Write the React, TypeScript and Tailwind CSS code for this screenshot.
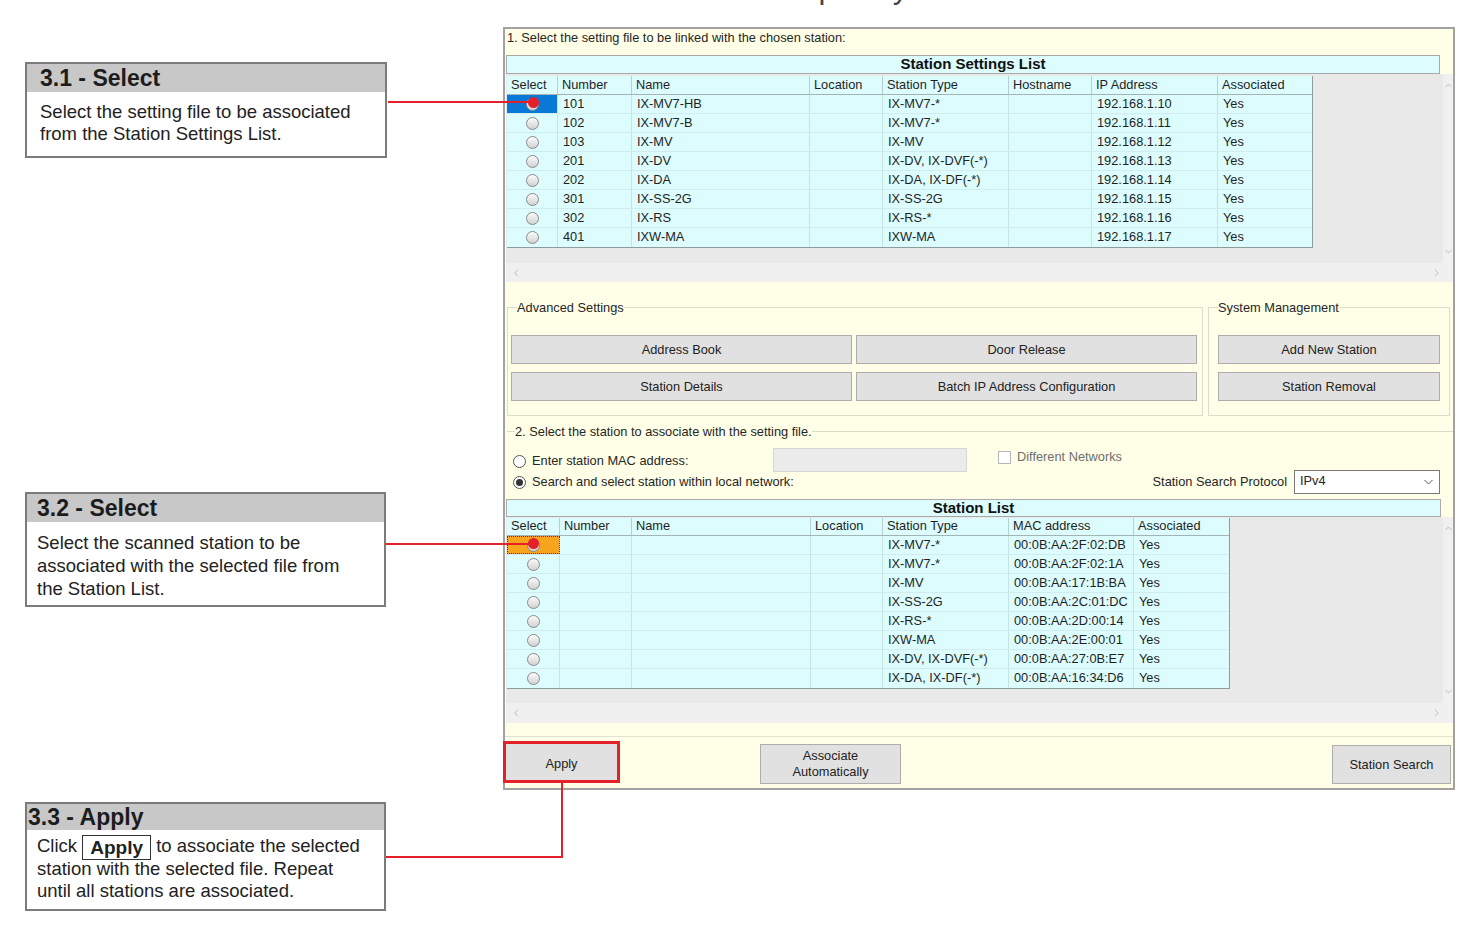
import React from "react";

const SET_COLS = ["w-[51px]", "w-[74px]", "w-[178px]", "w-[73px]", "w-[126px]", "w-[83px]", "w-[126px]", "w-[94px]"];
const SET_HEAD = ["Select", "Number", "Name", "Location", "Station Type", "Hostname", "IP Address", "Associated"];
const SET_ROWS = [
  ["101", "IX-MV7-HB", "", "IX-MV7-*", "", "192.168.1.10", "Yes"],
  ["102", "IX-MV7-B", "", "IX-MV7-*", "", "192.168.1.11", "Yes"],
  ["103", "IX-MV", "", "IX-MV", "", "192.168.1.12", "Yes"],
  ["201", "IX-DV", "", "IX-DV, IX-DVF(-*)", "", "192.168.1.13", "Yes"],
  ["202", "IX-DA", "", "IX-DA, IX-DF(-*)", "", "192.168.1.14", "Yes"],
  ["301", "IX-SS-2G", "", "IX-SS-2G", "", "192.168.1.15", "Yes"],
  ["302", "IX-RS", "", "IX-RS-*", "", "192.168.1.16", "Yes"],
  ["401", "IXW-MA", "", "IXW-MA", "", "192.168.1.17", "Yes"],
];

const STA_COLS = ["w-[53px]", "w-[72px]", "w-[179px]", "w-[72px]", "w-[126px]", "w-[125px]", "w-[95px]"];
const STA_HEAD = ["Select", "Number", "Name", "Location", "Station Type", "MAC address", "Associated"];
const STA_ROWS = [
  ["", "", "", "IX-MV7-*", "00:0B:AA:2F:02:DB", "Yes"],
  ["", "", "", "IX-MV7-*", "00:0B:AA:2F:02:1A", "Yes"],
  ["", "", "", "IX-MV", "00:0B:AA:17:1B:BA", "Yes"],
  ["", "", "", "IX-SS-2G", "00:0B:AA:2C:01:DC", "Yes"],
  ["", "", "", "IX-RS-*", "00:0B:AA:2D:00:14", "Yes"],
  ["", "", "", "IXW-MA", "00:0B:AA:2E:00:01", "Yes"],
  ["", "", "", "IX-DV, IX-DVF(-*)", "00:0B:AA:27:0B:E7", "Yes"],
  ["", "", "", "IX-DA, IX-DF(-*)", "00:0B:AA:16:34:D6", "Yes"],
];

function Chev({ dir }: { dir: "left" | "right" | "up" | "down" }) {
  const flat = dir === "up" || dir === "down";
  const d = {
    left: "M4 0.5L0.8 4L4 7.5",
    right: "M1 0.5L4.2 4L1 7.5",
    up: "M0.5 4L3.5 1L6.5 4",
    down: "M0.5 1L3.5 4L6.5 1",
  }[dir];
  return (
    <svg width={flat ? 7 : 5} height={flat ? 5 : 8} viewBox={flat ? "0 0 7 5" : "0 0 5 8"}>
      <path d={d} fill="none" stroke="#bdbdbd" strokeWidth="1" />
    </svg>
  );
}

function TableRadio() {
  return <span className="block w-[13px] h-[13px] rounded-full border border-[#8a8a8a] bg-linear-to-b from-[#fbfbfb] to-[#d2d2d2]" />;
}

function FormRadio({ checked }: { checked?: boolean }) {
  return (
    <span className="w-[13px] h-[13px] shrink-0 rounded-full border border-[#555] bg-white flex items-center justify-center">
      {checked && <span className="w-[7px] h-[7px] rounded-full bg-[#333]" />}
    </span>
  );
}

interface TableProps {
  cols: string[];
  head: string[];
  rows: string[][];
  headH: string;
  selClass: string;
}

function DataTable({ cols, head, rows, headH, selClass }: TableProps) {
  return (
    <div className="w-fit border-r border-b border-[#8f9c9e] bg-[#dcfcfe] text-[12.8px] text-[#1f1f1f] leading-none">
      <div className={`flex ${headH} border-b border-[#a3b4b6]`}>
        {head.map((h, i) => (
          <div
            key={h}
            className={`${cols[i]} shrink-0 flex items-center pl-[4px] whitespace-nowrap ${i < head.length - 1 ? "border-r border-[#b7cfd2]" : ""}`}
          >
            {h}
          </div>
        ))}
      </div>
      {rows.map((r, ri) => (
        <div key={ri} className={`flex h-[19px] ${ri < rows.length - 1 ? "border-b border-[#d0ecee]" : ""}`}>
          <div className={`${cols[0]} shrink-0 flex items-center justify-center border-r border-[#c6e3e6] ${ri === 0 ? selClass : ""}`}>
            <TableRadio />
          </div>
          {r.map((c, ci) => (
            <div
              key={ci}
              className={`${cols[ci + 1]} shrink-0 flex items-center pl-[5px] whitespace-nowrap ${ci < r.length - 1 ? "border-r border-[#c6e3e6]" : ""}`}
            >
              {c}
            </div>
          ))}
        </div>
      ))}
    </div>
  );
}

function VScroll({ py }: { py: string }) {
  return (
    <div className={`w-[10px] shrink-0 bg-[#f0f0f0] flex flex-col items-center justify-between ${py}`}>
      <Chev dir="up" />
      <Chev dir="down" />
    </div>
  );
}

function HScroll({ h }: { h: string }) {
  return (
    <div className={`${h} shrink-0 ml-[1px] bg-[#f0f0f0] flex items-center justify-between pl-[8px] pr-[14px]`}>
      <Chev dir="left" />
      <Chev dir="right" />
    </div>
  );
}

function Btn({ children, className }: { children: React.ReactNode; className: string }) {
  return (
    <div className={`bg-[#e1e1e1] border border-[#adadad] flex items-center justify-center text-center text-[12.8px] text-[#222] ${className}`}>
      {children}
    </div>
  );
}

function Callout({ title, titleClass, headH, className, bodyClass, children }: {
  title: string;
  titleClass: string;
  headH: string;
  className: string;
  bodyClass: string;
  children: React.ReactNode;
}) {
  return (
    <div className={`border-2 border-[#7b7b7b] bg-white ${className}`}>
      <div className={`${headH} bg-[#c8c8c8] flex items-center ${titleClass}`}>
        <span className="text-[23px] font-bold leading-none text-[#1c1c1c]">{title}</span>
      </div>
      <div className={`text-[18.5px] text-[#222] ${bodyClass}`}>{children}</div>
    </div>
  );
}

function MainWindow() {
  return (
    <div className="w-[952px] h-[763px] shrink-0 border-2 border-[#a2a2a2] bg-[#ffffe7] flex flex-col text-[12.8px] text-[#262626]">
      <div className="h-[26px] shrink-0 pl-[2px] pt-[1px] leading-[15px]">1. Select the setting file to be linked with the chosen station:</div>

      {/* Station Settings List */}
      <div className="h-[19px] w-[934px] shrink-0 ml-[1px] border border-[#a9a9a9] bg-[#dcfcfe] flex items-center justify-center text-[15px] font-bold text-[#111]">
        Station Settings List
      </div>
      <div className="h-[189px] shrink-0 ml-[1px] flex">
        <div className="flex-1 bg-[#e9e9e9] pt-[2px] pl-[1px]">
          <DataTable cols={SET_COLS} head={SET_HEAD} rows={SET_ROWS} headH="h-[19px]" selClass="bg-[#0a78d6]" />
        </div>
        <VScroll py="py-[9px]" />
      </div>
      <HScroll h="h-[19px]" />

      {/* Advanced settings / System management */}
      <div className="mt-[18px] shrink-0 flex gap-[5px] pl-[2px]">
        <fieldset className="w-[696px] border border-[#dcdccf] pl-[3px] pt-[20px] pb-[14px]">
          <legend className="ml-[6px] leading-[15px]">Advanced Settings</legend>
          <div className="grid grid-cols-[341px_341px] gap-x-[4px] gap-y-[8px]">
            <Btn className="h-[29px]">Address Book</Btn>
            <Btn className="h-[29px]">Door Release</Btn>
            <Btn className="h-[29px]">Station Details</Btn>
            <Btn className="h-[29px]">Batch IP Address Configuration</Btn>
          </div>
        </fieldset>
        <fieldset className="w-[242px] border border-[#dcdccf] pl-[9px] pt-[20px] pb-[14px]">
          <legend className="leading-[15px]">System Management</legend>
          <div className="flex flex-col gap-[8px]">
            <Btn className="w-[222px] h-[29px]">Add New Station</Btn>
            <Btn className="w-[222px] h-[29px]">Station Removal</Btn>
          </div>
        </fieldset>
      </div>

      {/* Section 2 */}
      <fieldset className="mt-[8px] ml-[2px] shrink-0 border-t border-[#d9d9cc] pt-[9px]">
        <legend className="ml-[8px] leading-[15px]">2. Select the station to associate with the setting file.</legend>
        <div className="flex items-center h-[24px]">
          <div className="w-[266px] flex items-center pl-[6px] mt-[3px]">
            <FormRadio />
            <span className="ml-[6px] leading-none">Enter station MAC address:</span>
          </div>
          <div className="w-[194px] h-[24px] bg-[#ebebeb] border border-[#d6d6d6]" />
          <div className="flex items-center -mt-[6px] ml-[31px]">
            <span className="w-[13px] h-[13px] border border-[#b6b6b6] bg-white" />
            <span className="ml-[6px] leading-none text-[#6e6e6e]">Different Networks</span>
          </div>
        </div>
        <div className="flex items-center h-[24px] -mt-[2px]">
          <div className="flex items-center pl-[6px]">
            <FormRadio checked />
            <span className="ml-[6px] leading-none">Search and select station within local network:</span>
          </div>
          <span className="ml-auto leading-none">Station Search Protocol</span>
          <div className="ml-[7px] mr-[13px] w-[146px] h-[24px] bg-white border border-[#7a7a7a] flex items-center justify-between pl-[5px] pr-[6px]">
            <span className="leading-none -mt-[2px]">IPv4</span>
            <svg width="9" height="6" viewBox="0 0 9 6">
              <path d="M0.5 1L4.5 5L8.5 1" fill="none" stroke="#555" strokeWidth="1" />
            </svg>
          </div>
        </div>
      </fieldset>

      {/* Station List */}
      <div className="mt-[5px] h-[18px] w-[935px] shrink-0 ml-[1px] border border-[#a9a9a9] bg-[#dcfcfe] flex items-center justify-center text-[15px] font-bold text-[#111]">
        Station List
      </div>
      <div className="h-[186px] shrink-0 ml-[1px] flex">
        <div className="flex-1 bg-[#e9e9e9] pt-[1px] pl-[1px]">
          <DataTable
            cols={STA_COLS}
            head={STA_HEAD}
            rows={STA_ROWS}
            headH="h-[18px]"
            selClass="bg-[#f8a51d] outline-1 outline-dotted outline-[#3a3a3a] -outline-offset-1"
          />
        </div>
        <VScroll py="py-[9px]" />
      </div>
      <HScroll h="h-[20px]" />
      <div className="h-[14px] shrink-0 border-b border-[#e0e0d3]" />

      {/* Bottom buttons */}
      <div className="h-[51px] shrink-0 flex items-start">
        <div className="-ml-[2px] mt-[4px] w-[117px] h-[42px] border-[3px] border-[#e4202a] bg-[#e1e1e1] flex items-center justify-center pt-[3px] text-[12.8px] text-[#222]">
          Apply
        </div>
        <Btn className="ml-[140px] mt-[7px] w-[141px] h-[40px] flex-col leading-[16px]">
          <span>Associate</span>
          <span>Automatically</span>
        </Btn>
        <Btn className="ml-auto mr-[2px] mt-[8px] w-[119px] h-[39px]">Station Search</Btn>
      </div>
    </div>
  );
}

export default function App() {
  return (
    <div className="relative w-[1472px] h-[932px] overflow-hidden bg-white font-['Liberation_Sans',Arial,sans-serif] text-[#222]">
      <div className="h-[27px] overflow-hidden">
        <p className="-mt-[28px] pl-[760px] text-[31px] leading-[31px] text-[#444]">completely</p>
      </div>

      <div className="flex">
        <div className="w-[503px] shrink-0 flex flex-col pl-[25px]">
          <Callout
            title="3.1 - Select"
            titleClass="pl-[13px]"
            headH="h-[28px]"
            className="mt-[35px] w-[362px] h-[96px]"
            bodyClass="pl-[13px] pt-[9px] leading-[22px]"
          >
            Select the setting file to be associated
            <br />
            from the Station Settings List.
          </Callout>

          <Callout
            title="3.2 - Select"
            titleClass="pl-[10px]"
            headH="h-[28px]"
            className="mt-[334px] w-[361px] h-[115px]"
            bodyClass="pl-[10px] pt-[9px] leading-[23px]"
          >
            Select the scanned station to be
            <br />
            associated with the selected file from
            <br />
            the Station List.
          </Callout>

          <Callout
            title="3.3 - Apply"
            titleClass="pl-[1px]"
            headH="h-[26px]"
            className="mt-[195px] w-[361px] h-[109px]"
            bodyClass="pl-[10px] pt-[5px] leading-[22.5px]"
          >
            Click{" "}
            <span className="inline-block -my-[2px] px-[7px] border border-[#333] font-bold text-[19px] leading-[23px] align-middle">
              Apply
            </span>{" "}
            to associate the selected
            <br />
            station with the selected file. Repeat
            <br />
            until all stations are associated.
          </Callout>
        </div>

        <MainWindow />
      </div>

      {/* callout connectors */}
      <div className="absolute left-[388px] top-[101px] w-[141px] h-[2px] bg-[#e4202a]" />
      <div className="absolute left-[528px] top-[97px] w-[11px] h-[11px] rounded-full bg-[#e4202a]" />

      <div className="absolute left-[386px] top-[543px] w-[143px] h-[2px] bg-[#e4202a]" />
      <div className="absolute left-[528px] top-[538px] w-[11px] h-[11px] rounded-full bg-[#e4202a]" />

      <div className="absolute left-[386px] top-[856px] w-[177px] h-[2px] bg-[#e4202a]" />
      <div className="absolute left-[561px] top-[782px] w-[2px] h-[76px] bg-[#e4202a]" />
    </div>
  );
}
